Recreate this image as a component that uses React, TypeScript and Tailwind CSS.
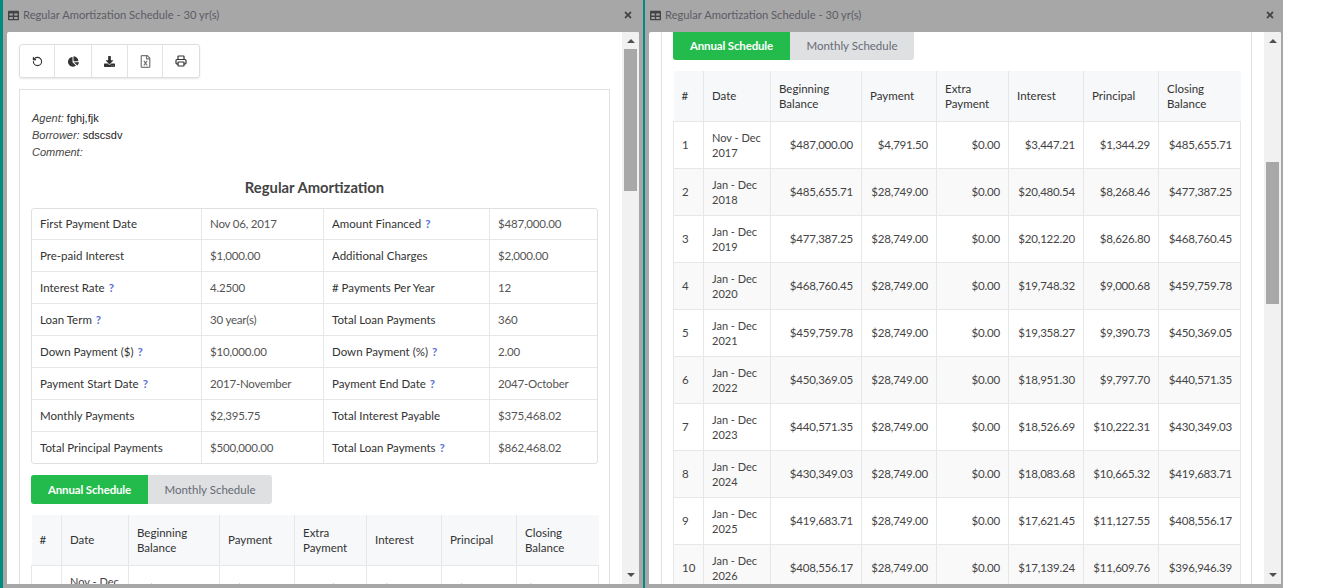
import { FaChartPie, FaDownload, FaRegFileExcel, FaTable, FaTimes } from "react-icons/fa";
import { Printer, RotateCcw } from "lucide-react";

const infoRows = [
  ["First Payment Date", "Nov 06, 2017", "Amount Financed", "$487,000.00", false, true],
  ["Pre-paid Interest", "$1,000.00", "Additional Charges", "$2,000.00", false, false],
  ["Interest Rate", "4.2500", "# Payments Per Year", "12", true, false],
  ["Loan Term", "30 year(s)", "Total Loan Payments", "360", true, false],
  ["Down Payment ($)", "$10,000.00", "Down Payment (%)", "2.00", true, true],
  ["Payment Start Date", "2017-November", "Payment End Date", "2047-October", true, true],
  ["Monthly Payments", "$2,395.75", "Total Interest Payable", "$375,468.02", false, false],
  ["Total Principal Payments", "$500,000.00", "Total Loan Payments", "$862,468.02", false, true],
] as const;

const schedule = [
  ["1", "Nov - Dec", "2017", "$487,000.00", "$4,791.50", "$0.00", "$3,447.21", "$1,344.29", "$485,655.71"],
  ["2", "Jan - Dec", "2018", "$485,655.71", "$28,749.00", "$0.00", "$20,480.54", "$8,268.46", "$477,387.25"],
  ["3", "Jan - Dec", "2019", "$477,387.25", "$28,749.00", "$0.00", "$20,122.20", "$8,626.80", "$468,760.45"],
  ["4", "Jan - Dec", "2020", "$468,760.45", "$28,749.00", "$0.00", "$19,748.32", "$9,000.68", "$459,759.78"],
  ["5", "Jan - Dec", "2021", "$459,759.78", "$28,749.00", "$0.00", "$19,358.27", "$9,390.73", "$450,369.05"],
  ["6", "Jan - Dec", "2022", "$450,369.05", "$28,749.00", "$0.00", "$18,951.30", "$9,797.70", "$440,571.35"],
  ["7", "Jan - Dec", "2023", "$440,571.35", "$28,749.00", "$0.00", "$18,526.69", "$10,222.31", "$430,349.03"],
  ["8", "Jan - Dec", "2024", "$430,349.03", "$28,749.00", "$0.00", "$18,083.68", "$10,665.32", "$419,683.71"],
  ["9", "Jan - Dec", "2025", "$419,683.71", "$28,749.00", "$0.00", "$17,621.45", "$11,127.55", "$408,556.17"],
  ["10", "Jan - Dec", "2026", "$408,556.17", "$28,749.00", "$0.00", "$17,139.24", "$11,609.76", "$396,946.39"],
];

const headers = ["#", "Date", "Beginning Balance", "Payment", "Extra Payment", "Interest", "Principal", "Closing Balance"];

function Hint() {
  return <span className="ml-1 font-bold text-[#5a6fd8]">?</span>;
}

function Tabs({ clipped }: { clipped?: boolean }) {
  return (
    <div className={`flex w-[241px] overflow-hidden bg-[#dfe0e2] ${clipped ? "h-[28px] rounded-b-[3px]" : "h-[29px] rounded-[3px]"}`}>
      <div className="flex w-[117px] items-center justify-center bg-[#22bb4c] font-bold tracking-[-0.15px] text-white">Annual Schedule</div>
      <div className="flex flex-1 items-center justify-center text-[#666a75]">Monthly Schedule</div>
    </div>
  );
}

function ScheduleTable() {
  return (
    <table className="w-[567px] table-fixed border-collapse text-[#444]">
      <colgroup>
        <col className="w-[30px]" />
        <col className="w-[67px]" />
        <col className="w-[91px]" />
        <col className="w-[75px]" />
        <col className="w-[72px]" />
        <col className="w-[75px]" />
        <col className="w-[75px]" />
        <col className="w-[82px]" />
      </colgroup>
      <thead>
        <tr className="h-[50px] bg-[#f7f8fa] text-[#333]">
          {headers.map((h) => (
            <th key={h} className="border border-t-0 border-[#e6e7e9] px-2 text-left font-normal leading-[15px] first:border-l-0 last:border-r-0">
              {h}
            </th>
          ))}
        </tr>
      </thead>
      <tbody>
        {schedule.map((r, i) => (
          <tr key={r[0]} className={`h-[47px] ${i % 2 === 1 ? "bg-[#f9f9f9]" : "bg-white"}`}>
            <td className="border border-[#e6e7e9] px-2">{r[0]}</td>
            <td className="border border-[#e6e7e9] px-2 text-[11px] leading-[15px]">
              {r[1]}
              <br />
              {r[2]}
            </td>
            {r.slice(3).map((v, j) => (
              <td key={j} className="border border-[#e6e7e9] px-2 text-right tracking-[-0.2px]">
                {v}
              </td>
            ))}
          </tr>
        ))}
      </tbody>
    </table>
  );
}

function Scrollbar({ thumbTop }: { thumbTop: string }) {
  return (
    <div className="flex w-[17px] shrink-0 flex-col items-center bg-[#f1f1f1]">
      <div className="mt-[7px] h-0 w-0 border-x-[4px] border-b-[4px] border-x-transparent border-b-[#505050]" />
      <div className={`${thumbTop} h-[142px] w-[13px] bg-[#a8a8a8]`} />
      <div className="mt-auto mb-[7px] h-0 w-0 border-x-[4px] border-t-[4px] border-x-transparent border-t-[#505050]" />
    </div>
  );
}

function Panel({ children, thumbTop, wide }: { children: React.ReactNode; thumbTop: string; wide?: boolean }) {
  return (
    <div className={`flex h-full shrink-0 flex-col bg-[#a7a7a7] pb-[4px] pl-[4px] ${wide ? "w-[640px] pr-[4px]" : "w-[638px] pr-[2px]"}`}>
      <div className="flex h-[32px] shrink-0 items-center pr-[6px] pb-[2px] pl-[1px] text-[#5c5c66]">
        <FaTable className="mr-[4px] text-[11px] text-[#444]" />
        <span className="text-[11.2px]">Regular Amortization Schedule - 30 yr(s)</span>
        <FaTimes className="ml-auto text-[10px] text-[#444]" />
      </div>
      <div className="flex min-h-0 flex-1 overflow-hidden rounded-t-[2px] bg-white">
        <div className="min-w-0 flex-1 overflow-hidden px-[12px]">{children}</div>
        <Scrollbar thumbTop={thumbTop} />
      </div>
    </div>
  );
}

export default function App() {
  return (
    <div className="flex h-[588px] w-[1341px] overflow-hidden bg-white font-['Lato',sans-serif] text-[11.5px] text-[#333]">
      <div className="w-[3px] shrink-0 bg-[#008a80]" />
      <Panel thumbTop="mt-[6px]" wide>
        <div className="mt-[12px] flex h-[34px] w-[181px] rounded-[3px] border border-[#dedede] text-[#333] shadow-[0_1px_2px_rgba(0,0,0,0.1)]">
          <div className="flex w-[35px] items-center justify-center border-r border-[#e3e3e3]">
            <RotateCcw size={11} strokeWidth={2.4} />
          </div>
          <div className="flex w-[37px] items-center justify-center border-r border-[#e3e3e3]">
            <FaChartPie className="text-[11px]" />
          </div>
          <div className="flex w-[36px] items-center justify-center border-r border-[#e3e3e3]">
            <FaDownload className="text-[11px]" />
          </div>
          <div className="flex w-[35px] items-center justify-center border-r border-[#e3e3e3]">
            <FaRegFileExcel className="text-[13px] text-[#777]" />
          </div>
          <div className="flex flex-1 items-center justify-center">
            <Printer size={12} strokeWidth={2.4} />
          </div>
        </div>
        <div className="mt-[11px] w-[591px] border border-[#e0e0e0] px-[11px] pt-[20px]">
          <div className="pl-[1px] font-['Liberation_Sans',sans-serif] text-[11px] leading-[17px] text-[#222]">
            <div>
              <i className="text-[#444]">Agent:</i> fghj,fjk
            </div>
            <div>
              <i className="text-[#444]">Borrower:</i> sdscsdv
            </div>
            <div>
              <i className="text-[#444]">Comment:</i>
            </div>
          </div>
          <h2 className="mt-[17px] mb-[12px] text-center text-[14.8px] leading-[18px] font-bold text-[#444]">Regular Amortization</h2>
          <table className="w-[567px] table-fixed border-separate border-spacing-0 rounded-[3px] border border-[#e0e0e0]">
            <colgroup>
              <col className="w-[170px]" />
              <col className="w-[122px]" />
              <col className="w-[166px]" />
              <col />
            </colgroup>
            <tbody>
              {infoRows.map((r, i) => (
                <tr key={i} className={i === 0 ? "h-[30px]" : "h-[32px]"}>
                  <td className={`border-r border-[#e6e7e9] px-2 ${i ? "border-t" : ""}`}>
                    {r[0]}
                    {r[4] && <Hint />}
                  </td>
                  <td className={`border-r border-[#e6e7e9] px-2 tracking-[-0.2px] text-[#555] ${i ? "border-t" : ""}`}>{r[1]}</td>
                  <td className={`border-r border-[#e6e7e9] px-2 ${i ? "border-t" : ""}`}>
                    {r[2]}
                    {r[5] && <Hint />}
                  </td>
                  <td className={`border-[#e6e7e9] px-2 tracking-[-0.2px] text-[#555] ${i ? "border-t" : ""}`}>{r[3]}</td>
                </tr>
              ))}
            </tbody>
          </table>
          <div className="mt-[11px] mb-[11px]">
            <Tabs />
          </div>
          <ScheduleTable />
        </div>
      </Panel>
      <div className="w-[2px] shrink-0 bg-[#008a80]" />
      <Panel thumbTop="mt-[119px]">
        <div className="w-[591px] border-x border-[#e0e0e0] px-[11px]">
          <div className="mb-[11px]">
            <Tabs clipped />
          </div>
          <ScheduleTable />
        </div>
      </Panel>
    </div>
  );
}
